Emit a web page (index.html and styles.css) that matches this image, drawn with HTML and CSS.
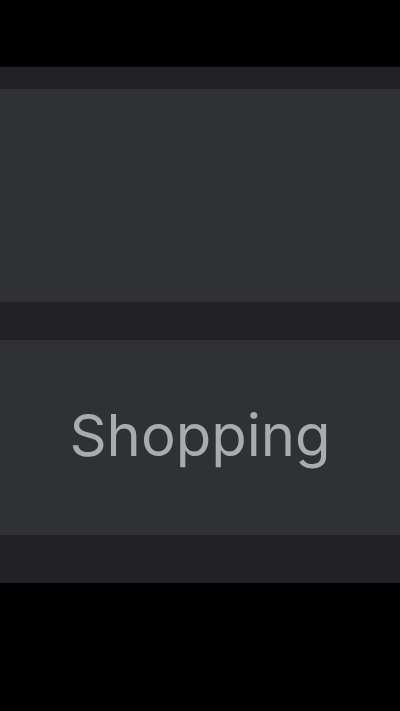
FILE: index.html
```html
<!DOCTYPE html>
<html>
<head>
<meta charset="utf-8">
<link rel="stylesheet" href="styles.css">
</head>
<body>
<div class="screen">
  <div class="top"></div>
  <div class="panel">
    <div class="card card-first"></div>
    <div class="card card-second"><span class="label">Shopping</span></div>
  </div>
</div>
</body>
</html>
```
FILE: styles.css
```css
html, body {
  margin: 0;
  padding: 0;
  background: #000;
}
.screen {
  width: 400px;
  height: 711px;
  display: flex;
  flex-direction: column;
}
.top {
  height: 67px;
  flex: none;
}
.panel {
  background: #222226;
  padding: 22px 0 48px;
  display: flex;
  flex-direction: column;
  gap: 38px;
}
.card {
  background: #2f3134;
}
.card-first {
  height: 213px;
}
.card-second {
  height: 195px;
  display: flex;
  align-items: center;
  justify-content: center;
}
.label {
  font-family: "Inter", sans-serif;
  font-size: 58px;
  color: #a9abae;
  letter-spacing: 0;
  margin-top: -6px;
}
```
